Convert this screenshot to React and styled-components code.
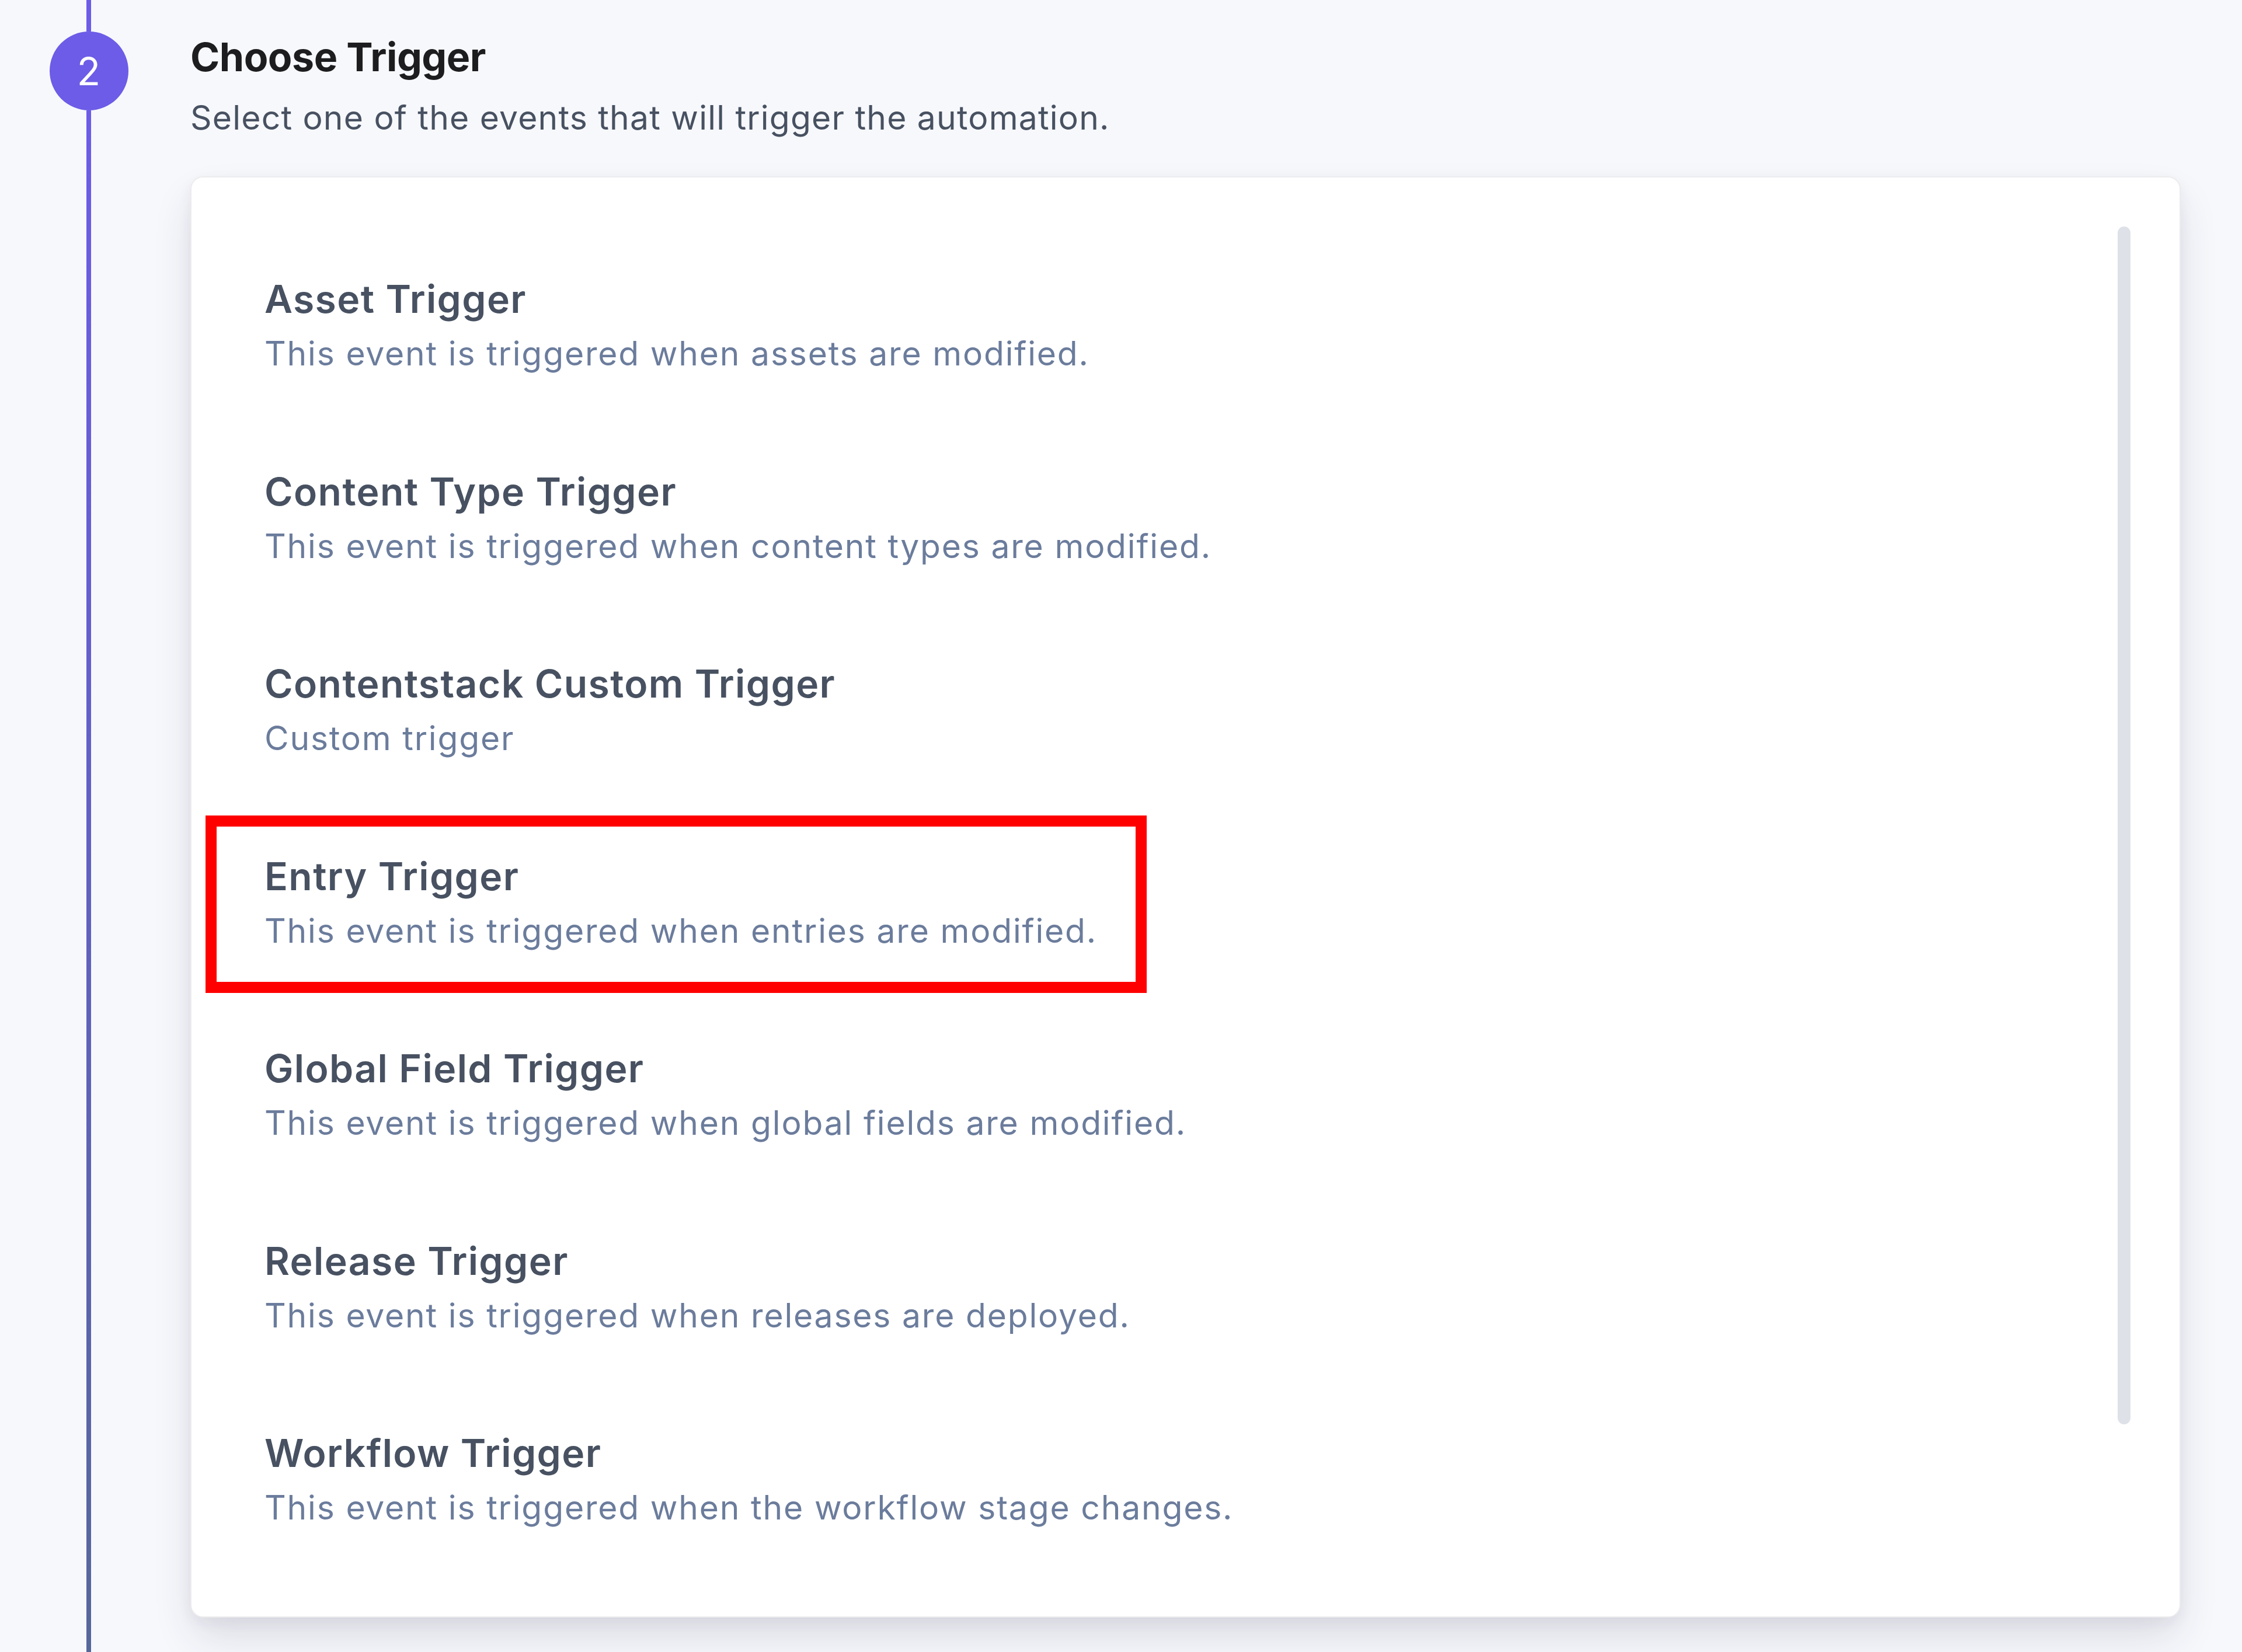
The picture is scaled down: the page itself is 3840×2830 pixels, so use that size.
import React from 'react';
import styled, { createGlobalStyle } from 'styled-components';

const GlobalStyle = createGlobalStyle`
  html, body {
    margin: 0;
    padding: 0;
    background: #f7f8fc;
  }
  body {
    font-family: Inter, "Noto Sans", "Liberation Sans", sans-serif;
    -webkit-font-smoothing: antialiased;
  }
`;

const Page = styled.div`
  display: grid;
  grid-template-columns: 304px 1fr;
  height: 2830px;
  overflow: hidden;
  background: #f7f8fc;
`;

const Rail = styled.div`
  display: flex;
  flex-direction: column;
  align-items: center;
`;

const RailLine = styled.div`
  width: 8px;
  height: ${({ grow }) => (grow ? 'auto' : '54px')};
  flex: ${({ grow }) => (grow ? 1 : 'none')};
  background: ${({ grow }) =>
    grow ? 'linear-gradient(180deg, #6c5ce7 0%, #6260c4 45%, #56679a 100%)' : '#6c5ce7'};
`;

const StepBadge = styled.div`
  width: 135px;
  height: 135px;
  border-radius: 50%;
  background: #6c5ce7;
  color: #fff;
  display: flex;
  align-items: center;
  justify-content: center;
  font-size: 66px;
  font-weight: 400;
  line-height: 1;
`;

const Content = styled.div`
  display: flex;
  flex-direction: column;
  padding: 56px 105px 0 22px;
`;

const Heading = styled.h2`
  margin: 0;
  font-size: 68px;
  line-height: 82px;
  font-weight: 700;
  color: #1d1d1f;
  letter-spacing: -0.5px;
`;

const Subheading = styled.p`
  margin: 24px 0 0;
  font-size: 57px;
  line-height: 80px;
  font-weight: 400;
  letter-spacing: 1.2px;
  color: #475161;
`;

const Card = styled.div`
  margin-top: 60px;
  display: flex;
  background: #fff;
  border: 2px solid #ececee;
  border-radius: 22px;
  box-shadow: 0 36px 70px -6px rgba(40, 44, 70, 0.14), 0 8px 24px rgba(40, 44, 70, 0.05);
`;

const TriggerList = styled.ul`
  list-style: none;
  margin: 0;
  padding: 90px 0 68px;
  flex: 1;
`;

const TriggerItem = styled.li`
  position: relative;
  padding: 78px 125px 77.5px;
  cursor: pointer;
`;

const Highlight = styled.span`
  position: absolute;
  top: 14px;
  bottom: 11px;
  left: 24px;
  width: 1612px;
  border: 19px solid #ff0000;
  box-sizing: border-box;
  pointer-events: none;
`;

const TriggerName = styled.div`
  font-size: 66px;
  line-height: 80px;
  font-weight: 600;
  letter-spacing: 1.4px;
  color: #475161;
`;

const TriggerDesc = styled.div`
  margin-top: 14px;
  font-size: 57px;
  line-height: 80px;
  font-weight: 400;
  letter-spacing: 1.8px;
  color: #6b7c9c;
`;

const ScrollTrack = styled.div`
  padding: 84px 84px 0 0;
`;

const ScrollThumb = styled.div`
  width: 22px;
  height: 2052px;
  border-radius: 11px;
  background: #dee1e8;
`;

const triggers = [
  { name: 'Asset Trigger', desc: 'This event is triggered when assets are modified.' },
  { name: 'Content Type Trigger', desc: 'This event is triggered when content types are modified.' },
  { name: 'Contentstack Custom Trigger', desc: 'Custom trigger' },
  { name: 'Entry Trigger', desc: 'This event is triggered when entries are modified.', marked: true },
  { name: 'Global Field Trigger', desc: 'This event is triggered when global fields are modified.' },
  { name: 'Release Trigger', desc: 'This event is triggered when releases are deployed.' },
  { name: 'Workflow Trigger', desc: 'This event is triggered when the workflow stage changes.' },
];

const App = () => (
  <>
    <GlobalStyle />
    <Page>
      <Rail>
        <RailLine />
        <StepBadge>2</StepBadge>
        <RailLine grow />
      </Rail>
      <Content>
        <Heading>Choose Trigger</Heading>
        <Subheading>Select one of the events that will trigger the automation.</Subheading>
        <Card>
          <TriggerList>
            {triggers.map((t) => (
              <TriggerItem key={t.name}>
                {t.marked && <Highlight />}
                <TriggerName>{t.name}</TriggerName>
                <TriggerDesc>{t.desc}</TriggerDesc>
              </TriggerItem>
            ))}
          </TriggerList>
          <ScrollTrack>
            <ScrollThumb />
          </ScrollTrack>
        </Card>
      </Content>
    </Page>
  </>
);

export default App;
